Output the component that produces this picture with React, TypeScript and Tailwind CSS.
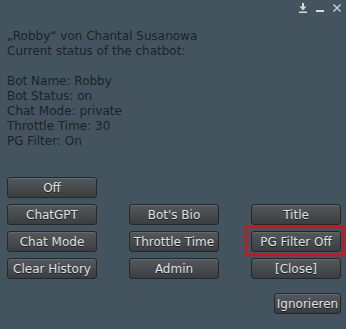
import React from 'react';

const FONT = { fontFamily: '"DejaVu Sans", Verdana, sans-serif' };

function DialogButton({ label, className = '' }: { label: string; className?: string }) {
  return (
    <button
      className={`h-[21px] rounded-[3px] border border-[#23282b] bg-gradient-to-b from-[#55595c] to-[#3a3e41] text-[12px] leading-none text-[#dfe1e2] [text-shadow:0_1px_0_#1b1e20] shadow-[inset_0_1px_0_rgba(255,255,255,0.1)] ${className}`}
      style={FONT}
    >
      {label}
    </button>
  );
}

export default function App() {
  return (
    <div className="w-[346px] h-[329px] bg-[#44545f] flex flex-col overflow-hidden" style={FONT}>
      {/* Title bar icons */}
      <div className="flex justify-end items-start gap-[9px] pr-[5px] pt-[3px] h-[20px] text-[#d3dadd]">
        <svg width="8" height="10" viewBox="0 0 8 10">
          <rect x="3" y="0" width="2" height="4" fill="currentColor" />
          <path d="M0.5 3.5 H7.5 L4 7.5 Z" fill="currentColor" />
          <rect x="0" y="8.5" width="8" height="1.5" fill="currentColor" />
        </svg>
        <svg width="8" height="10" viewBox="0 0 8 10">
          <rect x="0" y="7" width="8" height="2" fill="currentColor" />
        </svg>
        <svg width="8" height="8" viewBox="0 0 8 8" className="mt-[1px]">
          <path d="M0.5 0.5 L7.5 7.5 M7.5 0.5 L0.5 7.5" stroke="currentColor" strokeWidth="1.2" />
        </svg>
      </div>

      {/* Message */}
      <div className="pl-[7px] pt-[9px] text-[12px] leading-[15px] text-[#1c2228]">
        <div>„Robby“ von Chantal Susanowa</div>
        <div>Current status of the chatbot:</div>
        <div>&nbsp;</div>
        <div>Bot Name: Robby</div>
        <div>Bot Status: on</div>
        <div>Chat Mode: private</div>
        <div>Throttle Time: 30</div>
        <div>PG Filter: On</div>
      </div>

      {/* Buttons */}
      <div className="mt-[28px] ml-[7px] grid grid-cols-[90px_90px_90px] gap-x-[32px] gap-y-[6px]">
        <DialogButton label="Off" />
        <div />
        <div />
        <DialogButton label="ChatGPT" />
        <DialogButton label="Bot's Bio" />
        <DialogButton label="Title" />
        <DialogButton label="Chat Mode" />
        <DialogButton label="Throttle Time" />
        <div className="relative flex">
          <DialogButton label="PG Filter Off" className="w-full" />
          <span className="absolute -left-[6px] -right-[3px] -top-[5px] -bottom-[4px] border-2 border-[#e8080a] pointer-events-none" />
        </div>
        <DialogButton label="Clear History" />
        <DialogButton label="Admin" />
        <DialogButton label="[Close]" />
      </div>

      <div className="flex justify-end pr-[5px] mt-[14px]">
        <DialogButton label="Ignorieren" className="w-[67px]" />
      </div>
    </div>
  );
}
